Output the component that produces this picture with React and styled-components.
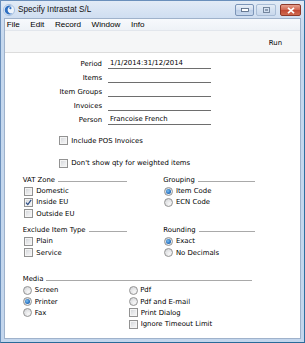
import React from 'react';
import styled, { createGlobalStyle } from 'styled-components';

const Global = createGlobalStyle`
  html, body { margin: 0; padding: 0; background: #ffffff; }
  body { width: 305px; height: 343px; overflow: hidden; font-family: "DejaVu Sans", sans-serif; }
  * { box-sizing: border-box; }
`;

const Window = styled.div`
  width: 305px;
  height: 343px;
  display: flex;
  flex-direction: column;
  border: 1px solid #6a8fbb;
  border-right-color: #2f6f9f;
  border-bottom-color: #2a6b99;
  background: linear-gradient(180deg, #e2ebf6 0px, #cfdef1 17px, #c5d8ee 40px, #c3d6ed 100%);
`;

const TitleBar = styled.div`
  height: 17px;
  display: flex;
  align-items: center;
  padding: 0 3px 0 2px;
  flex-shrink: 0;
`;

const Title = styled.span`
  font-family: "Liberation Sans", Arial, sans-serif;
  font-size: 8.2px;
  color: #111;
  margin-left: 3px;
  flex: 1;
`;

const Controls = styled.div`
  display: flex;
  align-items: center;
  gap: 2px;
  margin-top: 1px;
`;

const CtlButton = styled.div`
  width: ${p => p.$w}px;
  height: 12px;
  border-radius: 2px;
  display: flex;
  align-items: center;
  justify-content: center;
  margin-left: ${p => p.$ml || 0}px;
  border: 1px solid ${p => p.$red ? '#8d3a2b' : p.$faint ? '#a9bdd6' : '#7c95b8'};
  background: ${p => p.$red
    ? 'linear-gradient(180deg, #e6a08e 0%, #d26a55 45%, #c24a35 55%, #cf6a50 100%)'
    : p.$faint
      ? 'linear-gradient(180deg, #e4ecf6 0%, #d3e0f0 50%, #c9d8ec 100%)'
      : 'linear-gradient(180deg, #e9f0f8 0%, #d2def0 45%, #bccfe8 55%, #c8d8ed 100%)'};
`;

const Frame = styled.div`
  flex: 1;
  display: flex;
  flex-direction: column;
  padding: 0 3px 3px 3px;
  min-height: 0;
`;

const Client = styled.div`
  flex: 1;
  display: flex;
  flex-direction: column;
  border: 1px solid #9fb2cb;
  background: #ffffff;
  min-height: 0;
`;

const MenuBar = styled.div`
  height: 12px;
  display: flex;
  align-items: center;
  gap: 10.6px;
  padding-left: 1.7px;
  background: linear-gradient(180deg, #f7f9fc, #eef2f7);
  border-bottom: 1px solid #e2e6ec;
`;

const MenuItem = styled.span`
  font-family: "Liberation Sans", Arial, sans-serif;
  font-size: 8.1px;
  color: #000;
  line-height: 10px;
`;

const ToolBar = styled.div`
  height: 22px;
  display: flex;
  align-items: center;
  justify-content: flex-end;
  padding: 2px 18px 0 0;
  background: #f5f6f7;
  border-bottom: 1px solid #dcdcdc;
`;

const ToolButton = styled.span`
  font-size: 6.9px;
  color: #000;
`;

const Content = styled.div`
  flex: 1;
  padding-top: 4px;
  font-size: 6.9px;
  color: #000;
`;

const FieldGrid = styled.div`
  display: grid;
  grid-template-columns: 97px 103px;
  column-gap: 6px;
  grid-auto-rows: 14px;
  align-items: center;
`;

const Label = styled.span`
  text-align: right;
  line-height: 10px;
  white-space: nowrap;
`;

const Field = styled.div`
  height: 10px;
  line-height: 8px;
  padding-left: 2px;
  border-bottom: 1px solid #6e6e6e;
  white-space: nowrap;
`;

const OptionRow = styled.div`
  display: flex;
  align-items: center;
  height: 11.3px;
  gap: ${p => p.$gap ?? 3}px;
  padding-left: ${p => p.$indent || 0}px;
  margin-top: ${p => p.$mt || 0}px;
  white-space: nowrap;
`;

const Box = styled.span`
  width: 9px;
  height: 9px;
  flex-shrink: 0;
  border: 1px solid #929292;
  background: linear-gradient(135deg, #cfd2d6 0%, #e9eaec 55%, #f7f7f7 100%);
  box-shadow: inset 0 0 0 1px #f4f4f4;
  display: flex;
  align-items: center;
  justify-content: center;
`;

const Radio = styled.span`
  width: 9px;
  height: 9px;
  flex-shrink: 0;
  border-radius: 50%;
  border: 1px solid #949494;
  background: radial-gradient(circle at 65% 70%, #f8f8f8 0%, #e2e3e5 55%, #c9cbce 100%);
  display: flex;
  align-items: center;
  justify-content: center;
`;

const Dot = styled.span`
  width: 5px;
  height: 5px;
  border-radius: 50%;
  background: radial-gradient(circle at 40% 40%, #7fc0f0 0%, #2d78c6 55%, #174a8c 100%);
`;

const Groups = styled.div`
  display: grid;
  grid-template-columns: 104.5px 92px;
  column-gap: 36px;
  row-gap: 5px;
  padding-left: 17.7px;
  margin-top: 5.3px;
`;

const Group = styled.div`
  display: flex;
  flex-direction: column;
`;

const Header = styled.div`
  display: flex;
  align-items: center;
  height: 11.3px;
  white-space: nowrap;
`;

const Rule = styled.span`
  flex: 1;
  height: 1px;
  margin: 3px 0 0 3px;
  background: #a9a9a9;
`;

const Media = styled.div`
  width: 229px;
  margin: 15px 0 0 17.7px;
`;

const MediaGrid = styled.div`
  display: grid;
  grid-template-columns: 106px auto;
`;

const Column = styled.div`
  display: flex;
  flex-direction: column;
`;

const AppIcon = () => (
  <svg width="12" height="12" viewBox="0 0 12 12">
    <circle cx="6" cy="6" r="5.5" fill="#eef4fb" stroke="#7fa3cf" strokeWidth="0.6" />
    <path d="M9.2 2.4 A4.6 4.6 0 1 0 9.6 9.2 A3.6 3.6 0 1 1 9.2 2.4 Z" fill="#2f6fc2" />
    <circle cx="7.4" cy="4.2" r="1.1" fill="#2f6fc2" />
  </svg>
);

const Check = ({ checked }) => (
  <Box>
    {checked && (
      <svg width="7" height="7" viewBox="0 0 7 7">
        <path d="M1 3.6 L2.8 5.6 L6.2 0.8" fill="none" stroke="#2b4d86" strokeWidth="1.2" />
      </svg>
    )}
  </Box>
);

const RadioBtn = ({ checked }) => <Radio>{checked && <Dot />}</Radio>;

const CheckOption = ({ label, checked, indent, mt, gap }) => (
  <OptionRow $indent={indent} $mt={mt} $gap={gap}>
    <Check checked={checked} />
    <span>{label}</span>
  </OptionRow>
);

const RadioOption = ({ label, checked, indent, gap }) => (
  <OptionRow $indent={indent} $gap={gap}>
    <RadioBtn checked={checked} />
    <span>{label}</span>
  </OptionRow>
);

const fields = [
  ['Period', '1/1/2014:31/12/2014'],
  ['Items', ''],
  ['Item Groups', ''],
  ['Invoices', ''],
  ['Person', 'Francoise French'],
];

export default function App() {
  return (
    <>
      <Global />
      <Window>
        <TitleBar>
          <AppIcon />
          <Title>Specify Intrastat S/L</Title>
          <Controls>
            <CtlButton $w={19}>
              <svg width="8" height="4" viewBox="0 0 8 4">
                <rect x="0.5" y="0.5" width="7" height="3" fill="#ffffff" stroke="#4b5f7c" strokeWidth="0.8" />
              </svg>
            </CtlButton>
            <CtlButton $w={20} $faint>
              <svg width="7" height="6" viewBox="0 0 7 6">
                <rect x="0.5" y="0.5" width="6" height="5" fill="none" stroke="#6b7d96" strokeWidth="0.9" />
                <rect x="2" y="2" width="3" height="2" fill="#8d9db3" />
              </svg>
            </CtlButton>
            <CtlButton $w={21} $red $ml={2}>
              <svg width="8" height="7" viewBox="0 0 8 7">
                <path d="M1 0.8 L7 6.2 M7 0.8 L1 6.2" stroke="#ffffff" strokeWidth="1.7" />
              </svg>
            </CtlButton>
          </Controls>
        </TitleBar>
        <Frame>
          <Client>
            <MenuBar>
              <MenuItem>File</MenuItem>
              <MenuItem>Edit</MenuItem>
              <MenuItem>Record</MenuItem>
              <MenuItem>Window</MenuItem>
              <MenuItem>Info</MenuItem>
            </MenuBar>
            <ToolBar>
              <ToolButton>Run</ToolButton>
            </ToolBar>
            <Content>
              <FieldGrid>
                {fields.map(([l, v]) => (
                  <React.Fragment key={l}>
                    <Label>{l}</Label>
                    <Field>{v}</Field>
                  </React.Fragment>
                ))}
              </FieldGrid>
              <CheckOption label="Include POS Invoices" indent={54.3} mt={8} />
              <CheckOption label="Don't show qty for weighted items" indent={54.3} mt={11.3} />
              <Groups>
                <Group>
                  <Header>VAT Zone<Rule /></Header>
                  <CheckOption label="Domestic" indent={1.6} />
                  <CheckOption label="Inside EU" indent={1.6} checked />
                  <CheckOption label="Outside EU" indent={1.6} />
                </Group>
                <Group>
                  <Header>Grouping<Rule /></Header>
                  <RadioOption label="Item Code" indent={0.7} checked />
                  <RadioOption label="ECN Code" indent={0.7} />
                </Group>
                <Group>
                  <Header>Exclude Item Type<Rule /></Header>
                  <CheckOption label="Plain" indent={1.6} />
                  <CheckOption label="Service" indent={1.6} />
                </Group>
                <Group>
                  <Header>Rounding<Rule /></Header>
                  <RadioOption label="Exact" indent={0.7} checked />
                  <RadioOption label="No Decimals" indent={0.7} />
                </Group>
              </Groups>
              <Media>
                <Header>Media<Rule /></Header>
                <MediaGrid>
                  <Column>
                    <RadioOption label="Screen" indent={0.6} gap={2.5} />
                    <RadioOption label="Printer" indent={0.6} gap={2.5} checked />
                    <RadioOption label="Fax" indent={0.6} gap={2.5} />
                  </Column>
                  <Column>
                    <RadioOption label="Pdf" gap={2.5} />
                    <RadioOption label="Pdf and E-mail" gap={2.5} />
                    <CheckOption label="Print Dialog" />
                    <CheckOption label="Ignore Timeout Limit" />
                  </Column>
                </MediaGrid>
              </Media>
            </Content>
          </Client>
        </Frame>
      </Window>
    </>
  );
}
